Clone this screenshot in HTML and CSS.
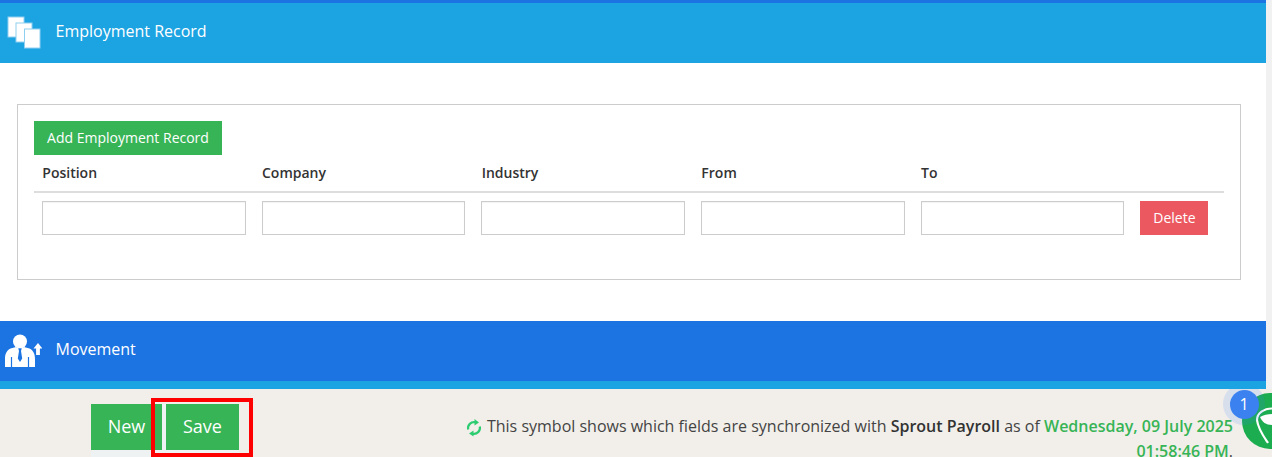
FILE: index.html
```html
<!DOCTYPE html>
<html lang="en">
<head>
<meta charset="utf-8">
<title>Employment Record</title>
<link rel="stylesheet" href="styles.css">
</head>
<body>
<div class="page">
  <main class="main">
    <div class="top-stripe"></div>
    <section class="band band-light">
      <svg class="band-icon" width="42" height="60" viewBox="0 0 42 60">
        <g fill="#fff" stroke="#8fd0f0" stroke-width="1">
          <rect x="8" y="14" width="16" height="20"/>
          <rect x="16" y="20" width="16" height="19"/>
          <rect x="24.500" y="26" width="15.500" height="19"/>
        </g>
      </svg>
      <span class="band-title">Employment Record</span>
    </section>
    <section class="content">
      <div class="panel">
        <button class="btn-add" type="button">Add Employment Record</button>
        <div class="grid grid-head">
          <div class="col-label">Position</div>
          <div class="col-label">Company</div>
          <div class="col-label">Industry</div>
          <div class="col-label">From</div>
          <div class="col-label">To</div>
          <div></div>
        </div>
        <div class="grid grid-row">
          <input class="field" type="text">
          <input class="field" type="text">
          <input class="field" type="text">
          <input class="field" type="text">
          <input class="field" type="text">
          <button class="btn-delete" type="button">Delete</button>
        </div>
      </div>
    </section>
    <section class="band band-dark">
      <svg class="band-icon" width="42" height="60" viewBox="0 0 42 60">
        <circle cx="20" cy="20.500" r="7" fill="#fff"/>
        <path fill="#fff" d="M5 46v-8c0-5 1.500-8.500 5.500-10.500l5.500-1.500 4 2 4-2 5.500 1.500c4 2 5.500 5.500 5.500 10.500v8z"/>
        <g fill="none" stroke="#1c73e2" stroke-width="1.200">
          <path d="M11.500 36v10M28.500 36v10"/>
        </g>
        <path fill="#1c73e2" d="M18.300 27.500h3.400l-.7 2.500 1.200 7.500-2.200 3.500-2.200-3.500 1.200-7.500z"/>
        <path fill="#fff" d="M38 22l-4.500 5.500h2.600V34h3.800v-6.500h2.600z"/>
      </svg>
      <span class="band-title">Movement</span>
    </section>
    <div class="bottom-stripe"></div>
  </main>
  <div class="scrollbar"></div>
</div>
<footer class="footer">
  <div class="actions">
    <button class="btn-green" type="button">New</button>
    <button class="btn-green btn-save" type="button">Save</button>
  </div>
  <p class="sync-note">
    <svg class="sync-icon" width="16" height="18" viewBox="0 0 16 18">
      <g fill="none" stroke="#2ecc71" stroke-width="2.200">
        <path d="M2.200 10.500A6 6 0 0 1 9.500 3.300"/>
        <path d="M13.800 7.500A6 6 0 0 1 6.500 14.700"/>
      </g>
      <path fill="#2ecc71" d="M8.500 0l4.500 3.400-4.500 3zM7.500 11.500v6L3 14.600z"/>
    </svg>
    This symbol shows which fields are synchronized with <strong>Sprout Payroll</strong> as of <span class="sync-date">Wednesday, 09 July 2025 01:58:46 PM</span>.
  </p>
</footer>
<div class="highlight"></div>
<div class="widget">
  <svg class="widget-logo" width="50" height="68" viewBox="0 0 50 68">
    <circle cx="48" cy="32" r="28" fill="#1bad4f"/>
    <path fill="none" stroke="#fff" stroke-width="2.200" d="M50 19.500C42 19.500 35 24 35 31c1 9 7 17 11 23"/>
    <path fill="#fff" d="M38 28c3-2 8-3 12-3v11c-6 0-10-3-12-8z"/>
  </svg>
  <div class="badge-halo"><span class="badge">1</span></div>
</div>
</body>
</html>
```
FILE: styles.css
```css
* { box-sizing: border-box; }
html, body { margin: 0; padding: 0; }
body {
  height: 457px;
  overflow: hidden;
  position: relative;
  background: #fff;
  font-family: "Open Sans", "Liberation Sans", sans-serif;
  color: #333;
}
.page { display: flex; height: 389px; }
.main { flex: 1; display: flex; flex-direction: column; }
.scrollbar { width: 6px; background: #f1f1f1; }
.top-stripe { height: 3px; background: #1c73e2; }
.band { height: 60px; display: flex; align-items: center; color: #fff; }
.band-light { background: #1ca3e2; }
.band-dark { background: #1c73e2; }
.band-icon { flex: none; width: 42px; height: 60px; }
.band-title { margin: 0 0 4px 13.500px; font-size: 16px; }
.bottom-stripe { height: 8px; background: #1ca3e2; }
.content { height: 258px; padding: 41px 25px 0 17px; background: #fff; }
.panel {
  height: 176px;
  border: 1px solid #ccc;
  padding: 16px 16px 0;
}
.btn-add {
  display: block;
  height: 34px;
  width: 188px;
  border: 0;
  padding: 0 0 2px;
  background: #37b456;
  color: #fff;
  font: 14px "Open Sans", sans-serif;
}
.grid {
  display: grid;
  grid-template-columns: repeat(5, 203.700px) 1fr;
  column-gap: 16px;
}
.grid-head { height: 38px; border-bottom: 2px solid #ddd; align-items: center; padding: 0 8px; }
.col-label { font-size: 14px; font-weight: 600; color: #333; padding: 0 0 2px .3px; }
.grid-row { padding: 8px 8px 0; }
.field {
  height: 34px;
  width: 100%;
  border: 1px solid #ccc;
  background: #fff;
  padding: 0 8px;
  box-shadow: inset 0 1px 1px rgba(0,0,0,.05);
}
.btn-delete {
  width: 68px;
  height: 34px;
  border: 0;
  padding: 0 0 2px;
  background: #ec5860;
  color: #fff;
  font: 14px "Open Sans", sans-serif;
}
.footer {
  height: 68px;
  background: #f2efea;
  display: flex;
  justify-content: space-between;
  padding: 15px 39px 0 91px;
}
.actions {
  display: flex;
  gap: 4px;
  align-items: flex-start;
  align-self: stretch;
  background: #eef2f2;
}
.btn-green {
  height: 46px;
  width: 71px;
  border: 0;
  padding: 0 0 2px;
  background: #37b456;
  color: #fff;
  font: 18px "Open Sans", sans-serif;
}
.btn-save { width: 73px; }
.sync-note {
  margin: 0;
  width: 780px;
  font-size: 16px;
  line-height: 25px;
  text-align: right;
  color: #444;
  padding-top: 10px;
}
.sync-icon { vertical-align: -5px; margin-right: 1px; }
.sync-note strong { font-weight: 600; color: #333; }
.sync-date { color: #37b456; font-weight: 600; }
.highlight {
  position: absolute;
  left: 151px;
  top: 398px;
  width: 102px;
  height: 59px;
  border: 4px solid #f00;
}
.widget {
  position: absolute;
  left: 1222px;
  top: 389px;
  width: 50px;
  height: 68px;
  overflow: hidden;
}
.widget-logo { display: block; }
.badge-halo {
  position: absolute;
  left: 1px;
  top: -6px;
  width: 42px;
  height: 42px;
  border-radius: 50%;
  background: rgba(59,130,246,.15);
  display: flex;
  align-items: center;
  justify-content: center;
}
.badge {
  width: 29px;
  height: 29px;
  border-radius: 50%;
  background: #3b82f0;
  color: #fff;
  font-size: 16px;
  line-height: 29px;
  text-align: center;
}
```
